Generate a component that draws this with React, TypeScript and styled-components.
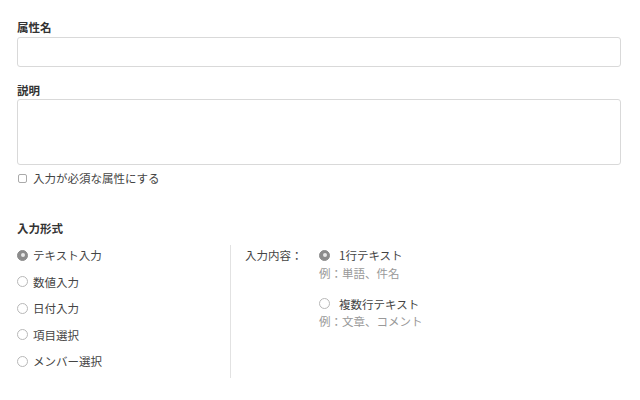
import React from "react";
import styled, { createGlobalStyle } from "styled-components";

const Global = createGlobalStyle`
  html, body { margin: 0; padding: 0; background: #fff; }
  body { font-family: "Noto Sans CJK JP", "Noto Sans", sans-serif; color: #444; }
`;

const Page = styled.div`
  width: 640px;
  height: 400px;
  box-sizing: border-box;
  padding: 19px 19px 0 17px;
  display: flex;
  flex-direction: column;
`;

const Label = styled.div<{ $top?: number }>`
  font-size: 11.5px;
  line-height: 16px;
  font-weight: 700;
  color: #333;
  margin-top: ${(p) => p.$top ?? 0}px;
`;

const TextInput = styled.div`
  margin-top: 2px;
  height: 30px;
  box-sizing: border-box;
  border: 1px solid #d9d9d9;
  border-radius: 3px;
  background: #fff;
`;

const TextArea = styled(TextInput)`
  margin-top: 1px;
  height: 66px;
`;

const CheckRow = styled.label`
  margin-top: 5px;
  display: flex;
  align-items: center;
  gap: 6px;
  font-size: 11.5px;
  line-height: 16px;
  color: #444;
`;

const Box = styled.span`
  width: 9px;
  height: 9px;
  margin-left: 1px;
  box-sizing: border-box;
  border: 1px solid #aaa;
  border-radius: 2px;
  background: #fff;
`;

const Columns = styled.div`
  margin-top: 6px;
  display: flex;
`;

const LeftCol = styled.div`
  width: 213px;
  display: flex;
  flex-direction: column;
`;

const RadioRow = styled.div`
  height: 26.5px;
  display: flex;
  align-items: center;
  gap: 5px;
  font-size: 11.5px;
  color: #444;
`;

const Radio = styled.span<{ $on?: boolean }>`
  width: 11px;
  height: 11px;
  flex: none;
  box-sizing: border-box;
  border-radius: 50%;
  border: 1px solid ${(p) => (p.$on ? "#8c8c8c" : "#b8b8b8")};
  background: ${(p) => (p.$on ? "#8c8c8c" : "#fff")};
  display: flex;
  align-items: center;
  justify-content: center;
  &::after {
    content: "";
    display: ${(p) => (p.$on ? "block" : "none")};
    width: 4px;
    height: 4px;
    border-radius: 50%;
    background: #e8e8e8;
  }
`;

const Divider = styled.div`
  width: 1px;
  margin-top: 3px;
  height: 133px;
  background: #e2e2e2;
`;

const RightCol = styled.div`
  padding-left: 14px;
  display: flex;
  align-items: flex-start;
`;

const FieldName = styled.div`
  width: 74px;
  height: 26.5px;
  display: flex;
  align-items: center;
  font-size: 11.5px;
  color: #444;
`;

const Options = styled.div`
  display: flex;
  flex-direction: column;
`;

const Option = styled.div<{ $top?: number }>`
  margin-top: ${(p) => p.$top ?? 0}px;
  display: flex;
  flex-direction: column;
`;

const OptionHead = styled.div`
  height: 26.5px;
  display: flex;
  align-items: center;
  gap: 9px;
  font-size: 11.5px;
  color: #444;
`;

const Hint = styled.div`
  margin-top: -4px;
  font-size: 11.5px;
  line-height: 16px;
  color: #999;
`;

const formats = ["テキスト入力", "数値入力", "日付入力", "項目選択", "メンバー選択"];

export default function App() {
  return (
    <>
      <Global />
      <Page>
        <Label>属性名</Label>
        <TextInput />
        <Label $top={15}>説明</Label>
        <TextArea />
        <CheckRow>
          <Box />
          入力が必須な属性にする
        </CheckRow>
        <Label $top={34}>入力形式</Label>
        <Columns>
          <LeftCol>
            {formats.map((f, i) => (
              <RadioRow key={f}>
                <Radio $on={i === 0} />
                {f}
              </RadioRow>
            ))}
          </LeftCol>
          <Divider />
          <RightCol>
            <FieldName>入力内容：</FieldName>
            <Options>
              <Option>
                <OptionHead>
                  <Radio $on />
                  1行テキスト
                </OptionHead>
                <Hint>例：単語、件名</Hint>
              </Option>
              <Option $top={10}>
                <OptionHead>
                  <Radio />
                  複数行テキスト
                </OptionHead>
                <Hint>例：文章、コメント</Hint>
              </Option>
            </Options>
          </RightCol>
        </Columns>
      </Page>
    </>
  );
}
